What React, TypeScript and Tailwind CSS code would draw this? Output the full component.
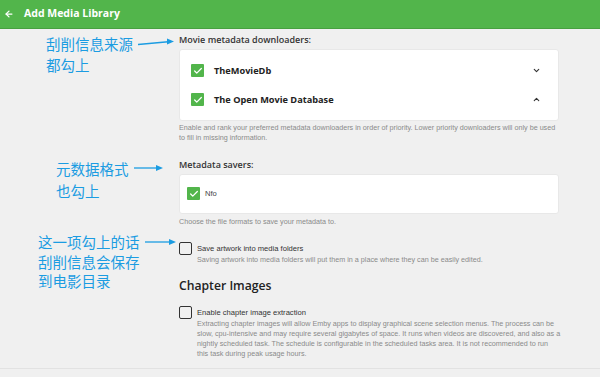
import { ArrowLeft, Check, ChevronDown, ChevronUp } from 'lucide-react'

const ui = { fontFamily: '"Open Sans", "Liberation Sans", sans-serif' }
const small = { fontFamily: '"Liberation Sans", Arial, sans-serif' }
const cjk = { fontFamily: '"Noto Sans CJK SC", sans-serif' }

function Arrow({ width, tilt = 0 }: { width: number; tilt?: number }) {
  return (
    <svg width={width} height="10" viewBox={`0 0 ${width} 10`} className="shrink-0">
      <line x1="0" y1={5 + tilt} x2={width - 3} y2={5 - tilt} stroke="#1b9ce2" strokeWidth="1.3" />
      <path d={`M${width - 7} ${2 - tilt} L${width} ${5 - tilt} L${width - 7} ${8 - tilt} Z`} fill="#1b9ce2" />
    </svg>
  )
}

function Note({ lines, indent, width, tilt, lh }: { lines: string[]; indent: string; width: number; tilt?: number; lh: string }) {
  return (
    <div className={`flex items-start ${indent}`}>
      <div className={`text-[14.5px] text-[#1b9ce2] ${lh}`} style={cjk}>
        {lines.map((l) => (
          <div key={l}>{l}</div>
        ))}
      </div>
      <div className="ml-[5px] mt-[5px]">
        <Arrow width={width} tilt={tilt} />
      </div>
    </div>
  )
}

function GreenBox() {
  return (
    <div className="w-[13px] h-[13px] bg-[#52b54b] rounded-[1px] flex items-center justify-center shrink-0">
      <Check className="w-[10px] h-[10px] text-white" strokeWidth={3} />
    </div>
  )
}

function EmptyBox() {
  return <div className="w-[13px] h-[13px] border-[1.5px] border-[#333] rounded-[2px] shrink-0" />
}

function Help({ children, className = '' }: { children: React.ReactNode; className?: string }) {
  return (
    <p className={`text-[7.2px] leading-[9.8px] text-[#8a8a8a] ${className}`} style={small}>
      {children}
    </p>
  )
}

export default function App() {
  return (
    <div className="w-[600px] h-[377px] bg-[#f0f0f0] overflow-hidden" style={ui}>
      <header className="h-[29px] bg-[#52b54b] border-b border-[#47a040] flex items-center">
        <ArrowLeft className="w-[10px] h-[10px] text-white ml-[4px]" strokeWidth={3} />
        <h1 className="ml-[10px] text-[10.5px] font-bold text-white">Add Media Library</h1>
      </header>

      {/* metadata downloaders */}
      <section className="flex mt-[4px]">
        <div className="w-[179px] shrink-0">
          <Note lines={['刮削信息来源', '都勾上']} indent="pl-[46px]" width={36} tilt={1.5} lh="leading-[21px]" />
        </div>
        <div className="w-[380px]">
          <h2 className="text-[9px] leading-[14px] font-semibold text-[#333]">Movie metadata downloaders:</h2>
          <div className="mt-[2px] bg-white border border-[#e8e8e8] rounded-[3px] py-[6px] pl-[11px] pr-[17px]">
            <div className="h-[29px] flex items-center">
              <GreenBox />
              <span className="ml-[10px] text-[9.2px] font-bold text-[#222] flex-1">TheMovieDb</span>
              <ChevronDown className="w-[9px] h-[9px] text-[#333]" strokeWidth={3} />
            </div>
            <div className="h-[29px] flex items-center">
              <GreenBox />
              <span className="ml-[10px] text-[9.2px] font-bold text-[#222] flex-1">The Open Movie Database</span>
              <ChevronUp className="w-[9px] h-[9px] text-[#333]" strokeWidth={3} />
            </div>
          </div>
          <Help className="mt-[2px]">
            Enable and rank your preferred metadata downloaders in order of priority. Lower priority downloaders will only be used
            to fill in missing information.
          </Help>
        </div>
      </section>

      {/* metadata savers */}
      <section className="flex mt-[15px]">
        <div className="w-[179px] shrink-0">
          <Note lines={['元数据格式', '也勾上']} indent="pl-[56px]" width={29} lh="leading-[22px]" />
        </div>
        <div className="w-[380px]">
          <h2 className="text-[9px] leading-[14px] font-semibold text-[#333]">Metadata savers:</h2>
          <div className="mt-[2px] bg-white border border-[#e8e8e8] rounded-[3px] h-[40px] pl-[7px] flex items-center">
            <GreenBox />
            <span className="ml-[5px] text-[7.6px] text-[#444]" style={small}>Nfo</span>
          </div>
          <Help className="mt-[3px]">Choose the file formats to save your metadata to.</Help>
        </div>
      </section>

      {/* artwork + chapter images */}
      <section className="flex mt-[6px]">
        <div className="w-[179px] shrink-0">
          <Note lines={['这一项勾上的话', '刮削信息会保存', '到电影目录']} indent="pl-[38px]" width={31} lh="leading-[19.5px]" />
        </div>
        <div className="w-[380px] pt-[10px]">
          <div className="flex items-start">
            <EmptyBox />
            <div className="ml-[5px]">
              <div className="text-[7.6px] leading-[13px] text-[#333]" style={small}>Save artwork into media folders</div>
              <Help>Saving artwork into media folders will put them in a place where they can be easily edited.</Help>
            </div>
          </div>
          <h2 className="mt-[12px] text-[12.2px] leading-[18px] font-semibold text-[#222]">Chapter Images</h2>
          <div className="mt-[11px] flex items-start">
            <EmptyBox />
            <div className="ml-[5px]">
              <div className="text-[7.6px] leading-[13px] text-[#333]" style={small}>Enable chapter image extraction</div>
              <Help className="w-[372px] whitespace-nowrap">
                Extracting chapter images will allow Emby apps to display graphical scene selection menus. The process can be
                <br />
                slow, cpu-intensive and may require several gigabytes of space. It runs when videos are discovered, and also as a
                <br />
                nightly scheduled task. The schedule is configurable in the scheduled tasks area. It is not recommended to run
                <br />
                this task during peak usage hours.
              </Help>
            </div>
          </div>
        </div>
      </section>
      <div className="mt-[10px] border-t border-[#e2e2e2]" />
    </div>
  )
}
